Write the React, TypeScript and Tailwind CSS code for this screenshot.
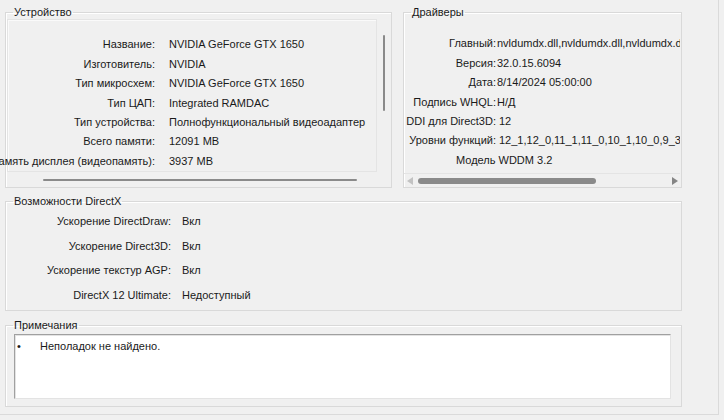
import React from 'react';

const deviceRows: [string, string][] = [
  ['Название:', 'NVIDIA GeForce GTX 1650'],
  ['Изготовитель:', 'NVIDIA'],
  ['Тип микросхем:', 'NVIDIA GeForce GTX 1650'],
  ['Тип ЦАП:', 'Integrated RAMDAC'],
  ['Тип устройства:', 'Полнофункциональный видеоадаптер'],
  ['Всего памяти:', '12091 MB'],
  ['Память дисплея (видеопамять):', '3937 MB'],
];

const driverRows: [string, string, boolean][] = [
  ['Главный:', 'nvldumdx.dll,nvldumdx.dll,nvldumdx.dll,nvldumdx.dll', false],
  ['Версия:', '32.0.15.6094', false],
  ['Дата:', '8/14/2024 05:00:00', false],
  ['Подпись WHQL:', 'Н/Д', false],
  ['DDI для Direct3D:', '12', true],
  ['Уровни функций:', '12_1,12_0,11_1,11_0,10_1,10_0,9_3,9_2,9_1', true],
];

const dxRows: [string, string][] = [
  ['Ускорение DirectDraw:', 'Вкл'],
  ['Ускорение Direct3D:', 'Вкл'],
  ['Ускорение текстур AGP:', 'Вкл'],
  ['DirectX 12 Ultimate:', 'Недоступный'],
];

const Legend = ({ children }: { children: React.ReactNode }) => (
  <legend className="ml-[7px] px-[1px] leading-[12px] text-[#1a1a1a]">{children}</legend>
);

const App = () => {
  return (
    <div className="w-[724px] h-[420px] bg-[#f0f0f0] overflow-hidden font-['Liberation_Sans',Arial,sans-serif] text-[11px] text-[#1a1a1a]">
      <div className="w-[719px] h-[415px] border-r border-b border-[#dadada] pl-[5px] pt-[6px]">
        {/* top row */}
        <div className="flex gap-[11px] h-[182px]">
          {/* Устройство */}
          <fieldset className="min-w-0 shrink-0 w-[387px] h-[182px] border border-[#d9d9d9] shadow-[inset_1px_1px_0_#fff]">
            <Legend>Устройство</Legend>
            <div className="flex h-[155px] mt-[1px] pl-[1px]">
              <div className="w-[370px] h-[153px] border border-[#e4e4e4] shadow-[inset_1px_1px_0_#fafafa] pt-[15px]">
                {deviceRows.map(([k, v]) => (
                  <div key={k} className="flex h-[19.4px] items-center whitespace-nowrap">
                    <div className="w-[147px] shrink-0 flex justify-end">
                      <span>{k}</span>
                    </div>
                    <span className="ml-[14px]">{v}</span>
                  </div>
                ))}
              </div>
              <div className="flex-1 flex justify-center pt-[16px]">
                <div className="w-[2px] h-[76px] bg-[#8a8a8a] rounded-full" />
              </div>
            </div>
            <div className="h-[12px] flex items-center pl-[37px]">
              <div className="w-[314px] h-[2px] bg-[#8a8a8a] rounded-full" />
            </div>
          </fieldset>

          {/* Драйверы */}
          <fieldset className="min-w-0 shrink-0 w-[279px] h-[182px] border border-[#d9d9d9] shadow-[inset_1px_1px_0_#fff] overflow-hidden">
            <Legend>Драйверы</Legend>
            <div className="w-[276px] h-[155px] mt-[1px] overflow-hidden pt-[15px] border-b border-[#e4e4e4]">
              {driverRows.map(([k, v, sp]) => (
                <div key={k} className="flex h-[19.4px] items-center whitespace-nowrap">
                  <div className="w-[92px] shrink-0 flex justify-end">
                    <span>{k}</span>
                  </div>
                  <span className={sp ? 'ml-[3px]' : 'ml-[1px]'}>{v}</span>
                </div>
              ))}
              <div className="flex h-[19.4px] items-center whitespace-nowrap pl-[52px]">Модель WDDM 3.2</div>
            </div>
            <div className="h-[13px] flex items-center px-[3px]">
              <svg width="6" height="8" viewBox="0 0 6 8">
                <polygon points="6,0 0,4 6,8" fill="#c2c2c2" />
              </svg>
              <div className="ml-[5px] w-[178px] h-[6px] bg-[#8a8a8a] rounded-full" />
              <div className="flex-1" />
              <svg width="6" height="8" viewBox="0 0 6 8">
                <polygon points="0,0 6,4 0,8" fill="#858585" />
              </svg>
            </div>
          </fieldset>
        </div>

        {/* Возможности DirectX */}
        <fieldset className="min-w-0 mt-[7px] w-[677px] h-[116px] border border-[#d9d9d9] shadow-[inset_1px_1px_0_#fff]">
          <Legend>Возможности DirectX</Legend>
          <div className="pt-[2px]">
            {dxRows.map(([k, v]) => (
              <div key={k} className="flex h-[24.6px] items-center whitespace-nowrap">
                <div className="w-[165px] shrink-0 flex justify-end">
                  <span>{k}</span>
                </div>
                <span className="ml-[11px]">{v}</span>
              </div>
            ))}
          </div>
        </fieldset>

        {/* Примечания */}
        <fieldset className="min-w-0 mt-[8px] w-[677px] h-[88px] border border-[#d9d9d9] shadow-[inset_1px_1px_0_#fff]">
          <Legend>Примечания</Legend>
          <div className="ml-[8px] mt-[3px] w-[657px] h-[65px] bg-white border-t border-l border-t-[#a0a0a0] border-l-[#a0a0a0] border-r border-b border-r-[#e3e3e3] border-b-[#e3e3e3] shadow-[inset_1px_1px_0_#e3e3e3]">
            <div className="flex leading-[14px] pt-[4px] pl-[2px]">
              <span className="w-[23px]">•</span>
              <span>Неполадок не найдено.</span>
            </div>
          </div>
        </fieldset>
      </div>
    </div>
  );
};

export default App;
